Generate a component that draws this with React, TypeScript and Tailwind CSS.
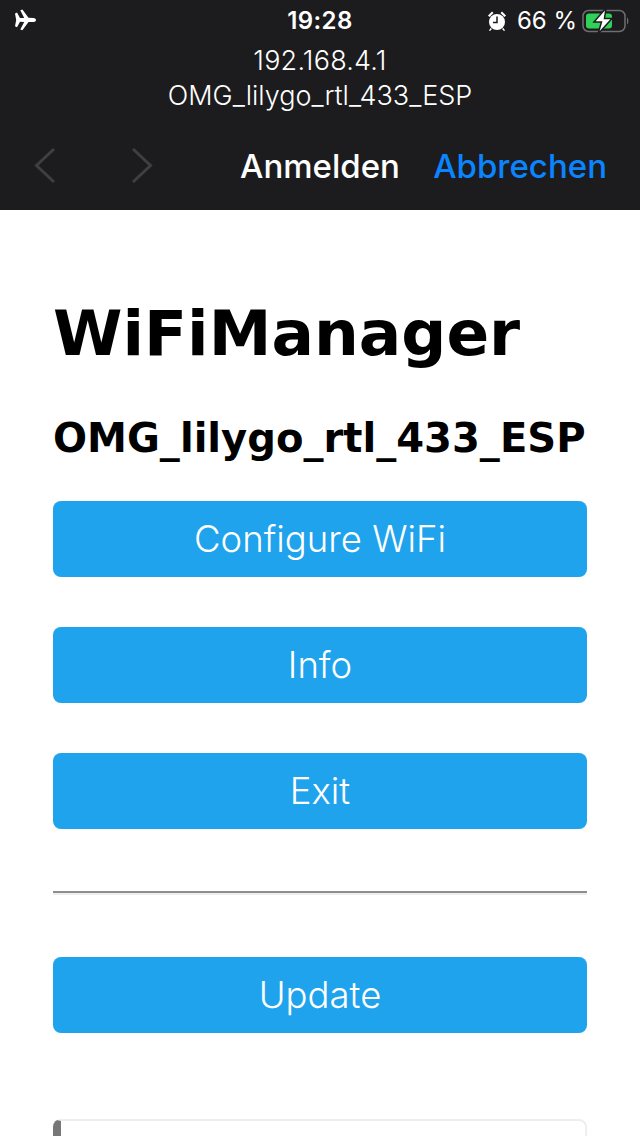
export default function App() {
  const ui = { fontFamily: 'Inter, "Liberation Sans", sans-serif' };
  const Btn = ({ t, cls }: { t: string; cls: string }) => (
    <div className={"h-[76px] w-full shrink-0 pt-[1px] rounded-[8px] bg-[#1fa3ec] flex items-center justify-center text-white text-[36.500px] font-light " + cls} style={ui}>{t}</div>
  );
  return (
    <div className="w-[640px] h-[1136px] bg-white overflow-hidden flex flex-col">
      <div className="h-[210px] shrink-0 bg-[#1c1c1e] text-white flex flex-col" style={ui}>
        <div className="h-[42px] pt-[6px] pl-[13px] pr-[10px] flex items-start justify-between relative">
          <svg width="24" height="22" viewBox="0 0 24 22" className="mt-[3px]">
            <path fill="#fff" d="M2 4.500 4 3.600 7 9l4.200-.1L7.300 1.200 9.400.6 15.500 8.800l5 .1c1.500 0 2.500 1 2.500 2s-1 2-2.500 2l-5 .1-6.100 8.200-2.100-.6 3.900-7.700L7 12.800 4 18.200l-2-.9 1.200-6.400Z"/>
          </svg>
          <div className="absolute left-0 right-0 top-[6px] text-center text-[24px] leading-[30px] font-semibold tracking-[0.400px]">19:28</div>
          <div className="flex items-center gap-[10px]">
            <svg width="20" height="22" viewBox="0 0 20 22">
              <circle cx="10" cy="12" r="8" fill="#fff"/>
              <path fill="#fff" d="M1 5.500 5 1.500 6.500 3 2.500 7ZM19 5.500 15 1.500 13.500 3 17.500 7ZM3.500 18 2 20.500 3 21 5 19ZM16.500 18 18 20.500 17 21 15 19Z"/>
              <path d="M10 6.500V12.500H6" stroke="#1c1c1e" strokeWidth="1.500" fill="none"/>
            </svg>
            <span className="text-[24px] leading-[30px] font-normal whitespace-nowrap">66 %</span>
            <svg width="48" height="26" viewBox="0 0 48 26" className="-ml-[5px]">
              <rect x="1" y="2.500" width="42" height="21" rx="5.500" fill="none" stroke="#6e6e70" strokeWidth="1.500"/>
              <rect x="4" y="5.500" width="26" height="15" rx="3" fill="#30d158"/>
              <path d="M45 9.500c1.800.5 1.800 6.500 0 7Z" fill="#6e6e70"/>
              <path d="M24 0 12 14h7.500L16 26 30 10.500h-7.500Z" fill="#fff" stroke="#1c1c1e" strokeWidth="1.500"/>
            </svg>
          </div>
        </div>
        <div className="text-center text-[27px] leading-[35px] font-light tracking-[0.200px] mt-[1px]">192.168.4.1</div>
        <div className="text-center text-[27px] leading-[35px] font-light">OMG_lilygo_rtl_433_ESP</div>
        <div className="relative flex items-center h-[94px] pt-[6px] mt-[3px]">
          <svg width="24" height="40" viewBox="0 0 24 40" className="absolute left-[33px] top-[30px]"><path d="M21 3 3.500 19.500 21 36" fill="none" stroke="#3f3f41" strokeWidth="3"/></svg>
          <svg width="24" height="40" viewBox="0 0 24 40" className="absolute left-[130px] top-[30px]"><path d="M3 3 20.500 19.500 3 36" fill="none" stroke="#3f3f41" strokeWidth="3"/></svg>
          <div className="w-full text-center text-[33px] leading-[40px] font-medium">Anmelden</div>
          <div className="absolute right-[33px] top-[30px] text-[33px] leading-[40px] font-medium text-[#0a84ff]">Abbrechen</div>
        </div>
      </div>
      <div className="flex-1 px-[53px] text-black flex flex-col overflow-hidden">
        <h1 className="text-[63px] leading-[76px] font-bold mt-[86px] whitespace-nowrap" style={{ fontFamily: '"DejaVu Sans", sans-serif' }}>WiFiManager</h1>
        <h3 className="text-[40.100px] leading-[46px] font-bold mt-[43px] whitespace-nowrap" style={{ fontFamily: '"DejaVu Sans", sans-serif' }}>OMG_lilygo_rtl_433_ESP</h3>
        <Btn t="Configure WiFi" cls="mt-[40px]" />
        <Btn t="Info" cls="mt-[50px]" />
        <Btn t="Exit" cls="mt-[50px]" />
        <div className="mt-[62px] h-[4px] shrink-0 border-t-2 border-[#8e8e8e] bg-[#eeeeee]" />
        <Btn t="Update" cls="mt-[62px]" />
        <div className="mt-[86px] h-[60px] shrink-0 rounded-[8px] border-2 border-[#eeeeee] border-l-[8px] border-l-[#777777]" />
      </div>
    </div>
  );
}
